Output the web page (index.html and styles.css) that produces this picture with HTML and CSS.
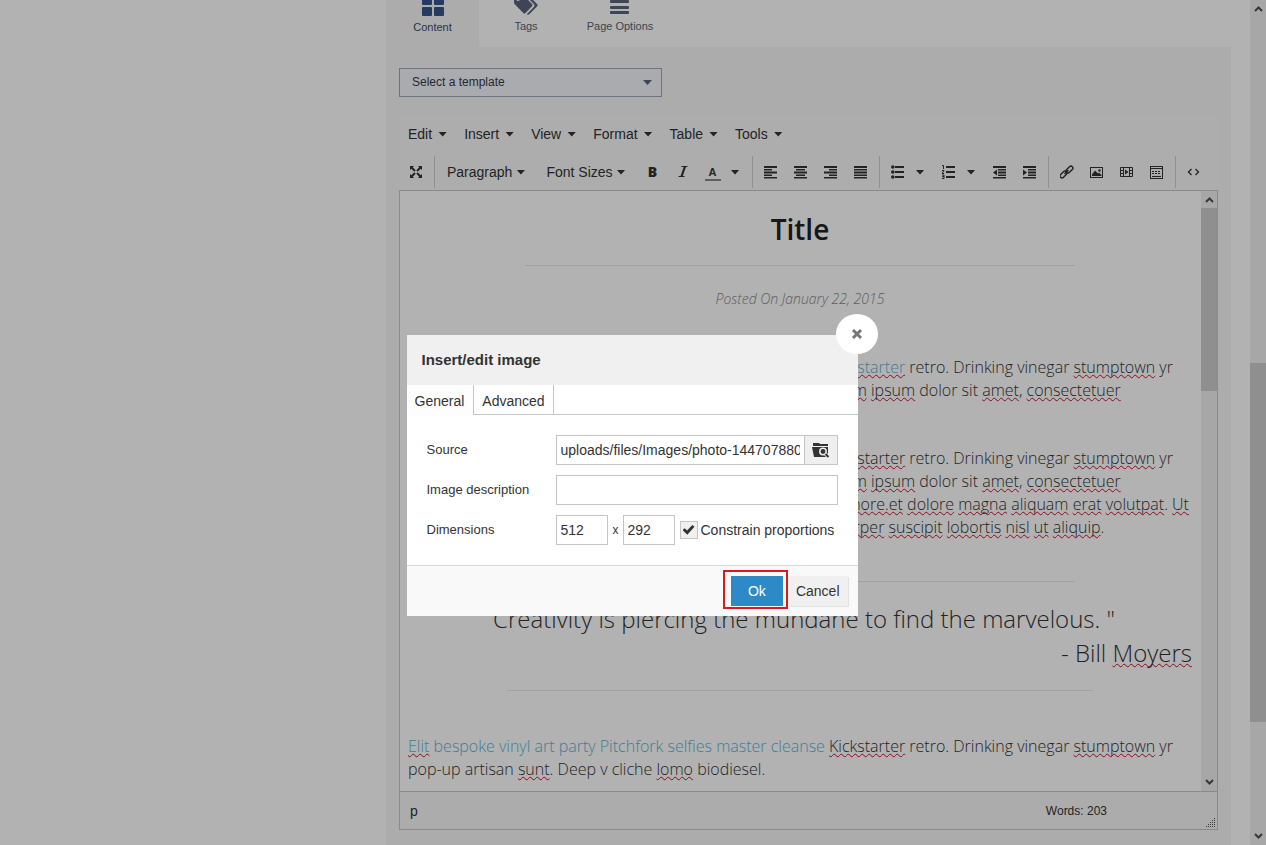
FILE: index.html
```html
<!DOCTYPE html>
<html lang="en">
<head>
<meta charset="utf-8">
<title>Edit page</title>
<link rel="stylesheet" href="styles.css">
</head>
<body>
<div class="page">
  <main class="panel">
    <nav class="tabs">
      <button class="tab tab-active" type="button">
        <svg width="22" height="20" viewBox="0 0 22 20" fill="currentColor"><rect x="0" y="0" width="10" height="9" rx="1"/><rect x="12" y="0" width="10" height="9" rx="1"/><rect x="0" y="11" width="10" height="9" rx="1"/><rect x="12" y="11" width="10" height="9" rx="1"/></svg>
        <span>Content</span>
      </button>
      <button class="tab" type="button">
        <svg width="24" height="20" viewBox="0 0 24 20" fill="currentColor"><path fill-rule="evenodd" d="M0 1.500Q0 0 1.500 0H7.500Q9 0 10.200 1L18 9Q19 10 18 11.200L11.500 18Q10.500 19 9.300 18L1 9.500Q0 8.500 0 7ZM4 2a2 2 0 1 0 .01 0Z"/><path d="M11 0h1.500q1.300 0 2.500 1l8 8q1.300 1.200 0 2.400L15.500 19q-1.500 1.300-2.700.2l7-7.200q1.300-1.500 0-3Z"/></svg>
        <span>Tags</span>
      </button>
      <button class="tab" type="button">
        <svg width="20" height="20" viewBox="0 0 20 20" fill="currentColor"><rect y="0" width="19" height="3" rx="1"/><rect y="5" width="19" height="3" rx="1"/><rect y="11" width="19" height="3" rx="1"/><rect y="16" width="19" height="3" rx="1"/></svg>
        <span>Page Options</span>
      </button>
    </nav>
    <div class="panel-body">
      <div class="template">
        <select class="template-select" aria-label="Template"><option>Select a template</option></select>
        <i class="caret template-caret"></i>
      </div>
      <section class="editor">
        <div class="menubar">
          <button type="button">Edit<i class="caret"></i></button>
          <button type="button">Insert<i class="caret"></i></button>
          <button type="button">View<i class="caret"></i></button>
          <button type="button">Format<i class="caret"></i></button>
          <button type="button">Table<i class="caret"></i></button>
          <button type="button">Tools<i class="caret"></i></button>
        </div>
        <div class="toolbar">
          <div class="group">
            <button class="tool" type="button" aria-label="Fullscreen"><svg width="14" height="14" viewBox="0 0 14 14"><path d="M1 1h4L1 5ZM13 1v4L9 1ZM1 13V9l4 4ZM13 13H9l4-4Z" fill="currentColor"/><path d="M2 2l4 4M12 2L8 6M2 12l4-4M12 12L8 8" stroke="currentColor" stroke-width="2"/></svg></button>
          </div>
          <div class="group">
            <button class="tool-text" type="button">Paragraph<i class="caret"></i></button>
            <button class="tool-text" type="button">Font Sizes<i class="caret"></i></button>
            <button class="tool tool-bold" type="button">B</button>
            <button class="tool" type="button" aria-label="Italic"><svg width="14" height="14" viewBox="0 0 14 14"><path d="M5.500 1.500h6M2.500 11.500h6" stroke="currentColor" stroke-width="1"/><path d="M9 1.500L5.500 11.500" stroke="currentColor" stroke-width="2.200"/></svg></button>
            <button class="tool" type="button"><span class="tool-color">A</span></button>
            <button class="tool-caret" type="button" aria-label="Text color options"><i class="caret"></i></button>
          </div>
          <div class="group">
            <button class="tool" type="button" aria-label="Align left"><svg width="14" height="14" viewBox="0 0 14 14"><path d="M0 1h13v2H0ZM0 4h8v1.500H0ZM0 6.500h13v2H0ZM0 9.500h8V11H0ZM0 12h13v1.500H0Z" fill="currentColor"/></svg></button>
            <button class="tool" type="button" aria-label="Align center"><svg width="14" height="14" viewBox="0 0 14 14"><path d="M0 1h13v2H0ZM2 4h9v1.500H2ZM0 6.500h13v2H0ZM2 9.500h9V11H2ZM0 12h13v1.500H0Z" fill="currentColor"/></svg></button>
            <button class="tool" type="button" aria-label="Align right"><svg width="14" height="14" viewBox="0 0 14 14"><path d="M0 1h13v2H0ZM5 4h8v1.500H5ZM0 6.500h13v2H0ZM5 9.500h8V11H5ZM0 12h13v1.500H0Z" fill="currentColor"/></svg></button>
            <button class="tool" type="button" aria-label="Justify"><svg width="14" height="14" viewBox="0 0 14 14"><path d="M0 1h13v2H0ZM0 4h13v1.500H0ZM0 6.500h13v2H0ZM0 9.500h13V11H0ZM0 12h13v1.500H0Z" fill="currentColor"/></svg></button>
          </div>
          <div class="group">
            <button class="tool" type="button" aria-label="Bullet list"><svg width="14" height="14" viewBox="0 0 14 14"><path d="M4 2h9M4 7h9M4 12h9" stroke="currentColor" stroke-width="2"/><g fill="currentColor"><circle cx="1.800" cy="2" r="1.800"/><circle cx="1.800" cy="7" r="1.800"/><circle cx="1.800" cy="12" r="1.800"/></g></svg></button>
            <button class="tool-caret" type="button" aria-label="Bullet styles"><i class="caret"></i></button>
            <button class="tool" type="button" aria-label="Numbered list"><svg width="14" height="14" viewBox="0 0 14 14"><path d="M4 2h9M4 7h9M4 12h9" stroke="currentColor" stroke-width="2"/><path d="M0 .5h1.500V4M0 5.500h2l-2 3h2M0 10h2v1.500H.5H2V13.500H0" fill="none" stroke="currentColor" stroke-width="1"/></svg></button>
            <button class="tool-caret" type="button" aria-label="Number styles"><i class="caret"></i></button>
            <button class="tool" type="button" aria-label="Decrease indent"><svg width="14" height="14" viewBox="0 0 14 14"><path d="M0 1h13v2H0ZM5 4h8v1.500H5ZM5 6.500h8v2H5ZM5 9.500h8V11H5ZM0 12h13v1.500H0Z" fill="currentColor"/><path d="M4 4.500v6L0 7.500Z" fill="currentColor"/></svg></button>
            <button class="tool" type="button" aria-label="Increase indent"><svg width="14" height="14" viewBox="0 0 14 14"><path d="M0 1h13v2H0ZM5 4h8v1.500H5ZM5 6.500h8v2H5ZM5 9.500h8V11H5ZM0 12h13v1.500H0Z" fill="currentColor"/><path d="M0 4.500v6l4-3Z" fill="currentColor"/></svg></button>
          </div>
          <div class="group">
            <button class="tool" type="button" aria-label="Link"><svg width="14" height="14" viewBox="0 0 14 14" fill="none" stroke="currentColor" stroke-width="1.400"><rect x="5.500" y="2.500" width="8" height="4" rx="2" transform="rotate(-45 9.500 4.500)"/><rect x="-.5" y="7.500" width="8" height="4" rx="2" transform="rotate(-45 3.500 9.500)"/><path d="M4.500 9l4-4"/></svg></button>
            <button class="tool" type="button" aria-label="Image"><svg width="14" height="14" viewBox="0 0 14 14"><rect x=".5" y="2.500" width="12" height="10" fill="none" stroke="currentColor"/><path d="M2 11V9.500l3-4 3 3 1-1 2.500 2.500v1Z" fill="currentColor"/><circle cx="9.500" cy="5.500" r="1.200" fill="currentColor"/></svg></button>
            <button class="tool" type="button" aria-label="Video"><svg width="14" height="14" viewBox="0 0 14 14"><path d="M.5 2.500h12v9H.5ZM3.500 2.500v9M9.500 2.500v9M.5 5.500h3M.5 8.500h3M9.500 5.500h3M9.500 8.500h3" fill="none" stroke="currentColor"/><path d="M5 4.500v5L8.500 7Z" fill="currentColor"/></svg></button>
            <button class="tool" type="button" aria-label="Template"><svg width="14" height="14" viewBox="0 0 14 14"><rect x=".5" y="1.500" width="12" height="12" fill="none" stroke="currentColor"/><path d="M1 3.500h11M2 11.500h9" stroke="currentColor" stroke-width="1"/><path d="M2 6.500h9M2 8.500h9" stroke="currentColor" stroke-dasharray="2 1"/></svg></button>
          </div>
          <div class="group">
            <button class="tool" type="button" aria-label="Source code"><svg width="14" height="14" viewBox="0 0 14 14" fill="none" stroke="currentColor" stroke-width="1.300"><path d="M4.500 4L1.500 7l3 3M8.500 4l3 3-3 3"/></svg></button>
          </div>
        </div>
        <div class="edit-area">
          <article class="doc">
            <h1>Title</h1>
            <hr class="rule">
            <p class="posted">Posted On January 22, 2015</p>
            <p class="para para-first"><a href="#">Elit bespoke vinyl art party Pitchfork selfies master cleanse <u>Kickstarter</u></a> retro. Drinking vinegar <u>stumptown</u> yr pop-up artisan <u>sunt</u>. Deep v cliche <u>lomo</u> biodiesel. Donec <u>Lorem</u> <u>ipsum</u> dolor sit <u>amet</u>, <u>consectetuer</u></p>
            <p class="para"><a href="#">Elit bespoke vinyl art party Pitchfork selfies master cleanse</a> <u>Kickstarter</u> retro. Drinking vinegar <u>stumptown</u> yr pop-up artisan <u>sunt</u>. Deep v cliche <u>lomo</u> biodiesel. Donec <u>Lorem</u> <u>ipsum</u> dolor sit <u>amet</u>, <u>consectetuer</u> adipiscing elit sed diam nonummy nibh euismod tincidunt a <u>lahore.et</u> <u>dolore</u> <u>magna</u> <u>aliquam</u> <u>erat</u> <u>volutpat</u>. <u>Ut</u> wisi enim ad minim veniam, quis nostrud exerci tation <u>ullamcorper</u> <u>suscipit</u> <u>lobortis</u> <u>nisl</u> <u>ut</u> <u>aliquip</u>.</p>
            <hr class="rule rule-quote">
            <blockquote>
              <p class="quote">Creativity is piercing the mundane to find the marvelous. "</p>
              <p class="quote-by">- Bill <u>Moyers</u></p>
            </blockquote>
            <hr class="rule rule-wide">
            <p class="para para-last"><a href="#"><u>Elit</u> bespoke vinyl art party Pitchfork selfies master cleanse</a> <u>Kickstarter</u> retro. Drinking vinegar <u>stumptown</u> yr pop-up artisan <u>sunt</u>. Deep v cliche <u>lomo</u> biodiesel.</p>
          </article>
          <div class="scroll">
            <svg class="arrow" width="9" height="6" viewBox="0 0 9 6"><path d="M1 5l3.500-3.500L8 5"/></svg>
            <div class="thumb thumb-doc"></div>
            <svg class="arrow" width="9" height="6" viewBox="0 0 9 6"><path d="M1 1l3.500 3.500L8 1"/></svg>
          </div>
        </div>
        <footer class="status">
          <span class="status-path">p</span>
          <span class="status-words">Words: 203</span>
          <svg class="grip" width="10" height="10" viewBox="0 0 10 10"><path d="M9.500 1v9M7.500 3v7M5.500 5v5M3.500 7v3M1.500 9v1" stroke="#555" stroke-dasharray="1 1"/></svg>
        </footer>
      </section>
    </div>
  </main>
  <div class="scroll">
    <svg class="arrow" width="9" height="6" viewBox="0 0 9 6"><path d="M1 5l3.500-3.500L8 5"/></svg>
    <div class="thumb thumb-page"></div>
    <svg class="arrow" width="9" height="6" viewBox="0 0 9 6"><path d="M1 1l3.500 3.500L8 1"/></svg>
  </div>
</div>

<div class="overlay">
  <form class="dialog" role="dialog" aria-labelledby="dialog-title">
    <header class="dialog-head"><h2 id="dialog-title">Insert/edit image</h2></header>
    <button class="close" type="button" aria-label="Close"><svg width="12" height="12" viewBox="0 0 12 12"><path d="M2 2l8 8M10 2l-8 8" stroke="#777" stroke-width="3"/></svg></button>
    <div class="dialog-tabs">
      <button class="dialog-tab dialog-tab-active" type="button">General</button>
      <button class="dialog-tab" type="button">Advanced</button>
    </div>
    <div class="fields">
      <div class="field">
        <label for="source">Source</label>
        <div class="picker">
          <input class="text" id="source" type="text" value="uploads/files/Images/photo-1447078806655">
          <button class="browse" type="button" aria-label="Browse"><svg width="18" height="16" viewBox="0 0 18 16"><path d="M1 1h6l1 1h8v2H1ZM0 5h16v10H2Z" fill="#333"/><circle cx="11" cy="9.500" r="3.200" fill="#333" stroke="#efefef" stroke-width="1.500"/><path d="M13.500 12l3 3" stroke="#efefef" stroke-width="3.500"/><path d="M13.500 12l3 3" stroke="#333" stroke-width="2"/></svg></button>
        </div>
      </div>
      <div class="field">
        <label for="description">Image description</label>
        <input class="text" id="description" type="text">
      </div>
      <div class="field">
        <label for="width">Dimensions</label>
        <div class="dims">
          <input class="text text-small" id="width" type="text" value="512">
          <span class="times">x</span>
          <input class="text text-small" type="text" value="292" aria-label="Height">
          <label class="constrain"><input type="checkbox" checked>Constrain proportions</label>
        </div>
      </div>
    </div>
    <footer class="dialog-foot">
      <span class="marked"><button class="ok" type="button">Ok</button></span>
      <button class="cancel" type="button">Cancel</button>
    </footer>
  </form>
</div>
</body>
</html>
```
FILE: styles.css
```css
* { box-sizing: border-box; }
html, body { height: 100%; margin: 0; overflow: hidden; }
body { background: #fff; color: #333; font: 14px/20px "Liberation Sans", Arial, sans-serif; }
button, input, select { font: inherit; color: inherit; margin: 0; }
button { padding: 0; border: 0; background: none; white-space: nowrap; }
svg { display: block; flex: none; }
h1, h2, p, hr, blockquote { margin: 0; }

.page { display: flex; min-height: 100vh; padding-left: 386px; }
.panel { flex: 1; min-width: 0; margin-right: 19px; background: #f6f6f6; }

.tabs { display: flex; height: 47px; background: #fff; overflow: hidden; }
.tab { display: flex; flex-direction: column; align-items: center; justify-content: flex-end; gap: 4px; width: 94px; padding-bottom: 14px; color: #596379; font-size: 11px; line-height: 14px; }
.tab-active { width: 93px; padding-bottom: 13px; background: #f6f6f6; color: #36568c; }
.tab-active span { color: #414b66; }

.panel-body { padding: 21px 13px 12px; }
.template { display: flex; align-items: center; position: relative; width: 263px; margin-bottom: 19px; }
.template-select { appearance: none; width: 100%; height: 29px; padding: 0 12px 2px; border: 1px solid #9ba5bf; border-radius: 0; background: #f3f5fa; color: #333a4d; font-size: 12px; }
.template-caret { position: absolute; right: 10px; color: #596379; }

.caret { display: block; width: 9px; height: 5px; background: currentColor; clip-path: polygon(0 0, 100% 0, 50% 100%); }

.editor { background: #f8f8f8; }
.menubar { display: flex; height: 36px; padding-left: 1px; }
.menubar button { display: flex; align-items: center; gap: 6px; padding: 0 9px 0 8px; }

.toolbar { display: flex; height: 38px; padding: 4px 0 2px 2px; }
.group { display: flex; padding: 0 3px; border-left: 1px solid #d0d0d0; }
.group:first-child { padding-left: 0; border-left: 0; }
.tool { display: flex; align-items: center; justify-content: center; width: 30px; }
.tool-text { display: flex; align-items: center; gap: 4px; margin-right: 3px; padding: 0 9px; }
.tool-caret { width: 21px; padding-left: 3px; }
.tool-bold { font-family: "Open Sans", sans-serif; font-weight: 800; }
.tool-color { width: 16px; padding-top: 3px; border-bottom: 2px solid #888; font-size: 11px; font-weight: bold; line-height: 13px; }

.edit-area { display: flex; height: 602px; border: 1px solid #c6c6c6; background: #fff; }
.doc { flex: 1; min-width: 0; padding: 19px 9px 0 8px; font: 300 16px/23px "Open Sans", sans-serif; overflow: hidden; }
.doc h1 { color: #222; font-size: 28px; font-weight: 600; line-height: 38px; text-align: center; }
.doc a { color: #5fb4d0; text-decoration: none; }
.doc u { text-decoration: underline wavy #c8102e 1px; text-underline-offset: 1px; text-decoration-skip-ink: none; }
.rule { width: 550px; height: 1px; margin: 17px auto 0; border: 0; background: #e8e8e8; }
.posted { margin-top: 21px; color: #888; font-size: 14px; font-style: italic; text-align: center; }
.para { margin-top: 45px; }
.para-first { margin-top: 46px; }
.para-last { margin-top: 44px; }
.rule-quote { margin-top: 42px; }
blockquote { margin-top: 20px; font-size: 24px; line-height: 34px; }
.quote { padding-left: 8px; text-align: center; }
.quote-by { text-align: right; }
.rule-wide { width: 586px; margin-top: 20px; }

.status { display: flex; align-items: center; height: 38px; padding: 0 2px 0 10px; border: 1px solid #c6c6c6; border-top: 0; background: #f6f6f6; }
.status-words { margin-left: auto; margin-right: 98px; font-size: 12px; }
.grip { align-self: flex-end; margin-bottom: 2px; }

.scroll { display: flex; flex-direction: column; flex: none; justify-content: space-between; align-items: center; width: 16px; padding: 6px 0; background: #f0f0f0; }
.scroll .arrow { fill: none; stroke: #505050; stroke-width: 2; }
.thumb { width: 100%; background: #cdcdcd; }
.thumb-page { height: 359px; margin-top: 351px; margin-bottom: auto; }
.thumb-doc { height: 183px; margin-top: 5px; margin-bottom: auto; }

.overlay { position: fixed; inset: 0; display: flex; justify-content: center; align-items: flex-start; padding: 335px 2px 0 0; background: rgba(0, 0, 0, .3); }
.dialog { position: relative; width: 451px; background: #fff; }
.dialog-head { padding: 15px; background: #f0f0f0; }
.dialog-head h2 { font-size: 15px; line-height: 20px; }
.close { position: absolute; top: -21px; right: -20px; display: flex; align-items: center; justify-content: center; width: 42px; height: 40px; border-radius: 50%; background: #fff; }
.dialog-tabs { display: flex; height: 30px; border-bottom: 1px solid #c5c5c5; }
.dialog-tab { padding: 2px 8px 0; border-right: 1px solid #c5c5c5; }
.dialog-tab-active { height: 30px; padding-right: 9px; background: #fdfdfd; }
.fields { display: flex; flex-direction: column; gap: 10px; padding: 20px; }
.field { display: grid; grid-template-columns: 129px 1fr; align-items: center; font-size: 13px; }
.text { width: 100%; height: 30px; padding: 0 4px; border: 1px solid #c5c5c5; border-radius: 0; background: #fff; font-size: 14px; }
.picker { display: flex; }
.picker .text { flex: 1; min-width: 0; }
.browse { display: flex; align-items: center; justify-content: center; width: 33px; border: 1px solid #c5c5c5; border-left: 0; background: #efefef; }
.dims { display: flex; align-items: center; gap: 5px; }
.text-small { width: 52px; }
.times { width: 5px; font-size: 12px; }
.constrain { display: flex; align-items: center; gap: 3px; font-size: 14px; white-space: nowrap; }
.constrain input { appearance: none; width: 18px; height: 18px; border: 1px solid #c5c5c5; background: #f0f0f0; display: grid; place-items: center; }
.constrain input:checked::before { content: ""; width: 12px; height: 10px; background: #333; clip-path: polygon(0 50%, 18% 32%, 38% 55%, 82% 0, 100% 18%, 40% 98%); }
.dialog-foot { display: flex; justify-content: flex-end; gap: 5px; padding: 10px; border-top: 1px solid #d8d8d8; background: #f9f9f9; }
.marked { position: relative; display: flex; }
.marked::after { content: ""; position: absolute; inset: -6px -5px -3px -8px; border: 2px solid #d71a20; pointer-events: none; }
.ok { width: 52px; height: 30px; background: #2d8ac7; color: #fff; }
.cancel { height: 30px; padding: 0 8px; background: #f0f0f0; box-shadow: 1px 1px 0 #e2e2e2; }
```
